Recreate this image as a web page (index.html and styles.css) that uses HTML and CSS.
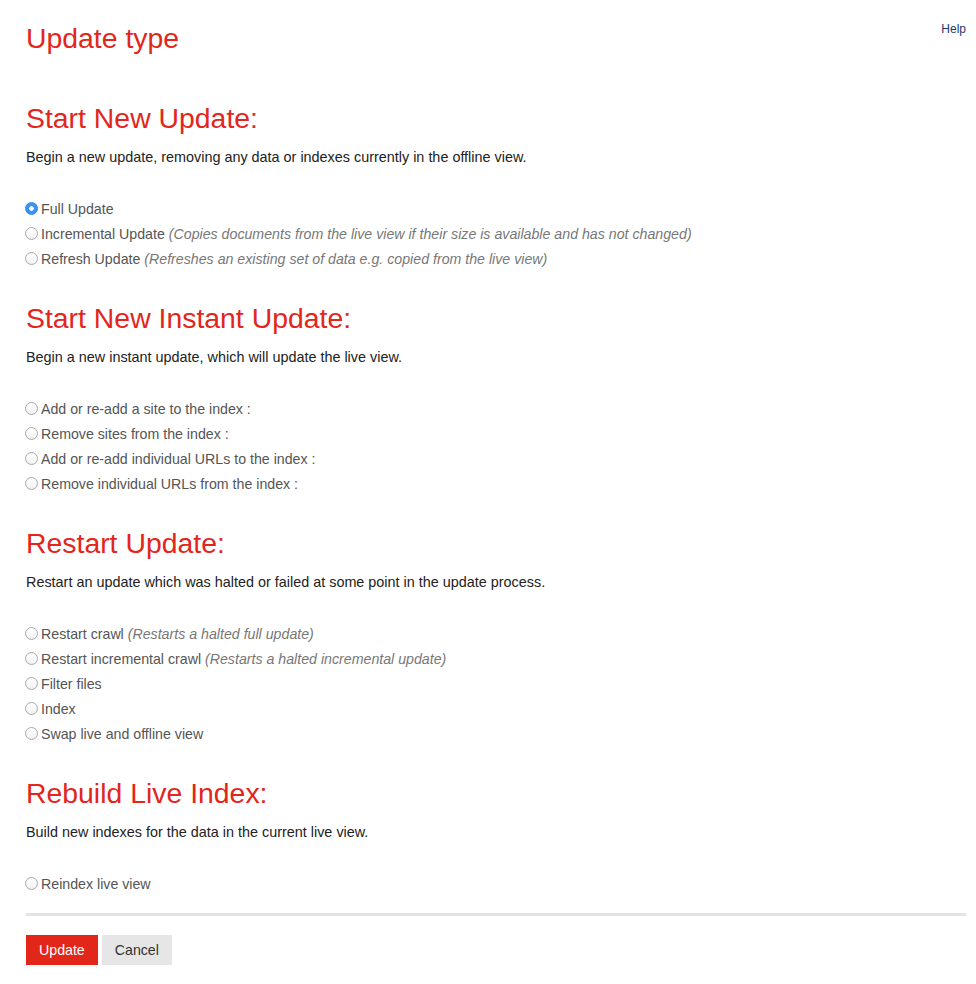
FILE: index.html
```html
<!DOCTYPE html>
<html lang="en">
<head>
<meta charset="utf-8">
<title>Update type</title>
<link rel="stylesheet" href="styles.css">
</head>
<body>
<div class="page">
  <header class="header">
    <h1 class="title">Update type</h1>
    <a class="help" href="#">Help</a>
  </header>

  <form class="form">
    <section class="section first">
      <h2 class="heading">Start New Update:</h2>
      <p class="desc">Begin a new update, removing any data or indexes currently in the offline view.</p>
      <div class="options">
        <label class="option"><input type="radio" name="t" checked><span>Full Update</span></label>
        <label class="option"><input type="radio" name="t"><span>Incremental Update <em>(Copies documents from the live view if their size is available and has not changed)</em></span></label>
        <label class="option"><input type="radio" name="t"><span>Refresh Update <em>(Refreshes an existing set of data e.g. copied from the live view)</em></span></label>
      </div>
    </section>

    <section class="section">
      <h2 class="heading">Start New Instant Update:</h2>
      <p class="desc">Begin a new instant update, which will update the live view.</p>
      <div class="options">
        <label class="option"><input type="radio" name="t"><span>Add or re-add a site to the index :</span></label>
        <label class="option"><input type="radio" name="t"><span>Remove sites from the index :</span></label>
        <label class="option"><input type="radio" name="t"><span>Add or re-add individual URLs to the index :</span></label>
        <label class="option"><input type="radio" name="t"><span>Remove individual URLs from the index :</span></label>
      </div>
    </section>

    <section class="section">
      <h2 class="heading">Restart Update:</h2>
      <p class="desc">Restart an update which was halted or failed at some point in the update process.</p>
      <div class="options">
        <label class="option"><input type="radio" name="t"><span>Restart crawl <em>(Restarts a halted full update)</em></span></label>
        <label class="option"><input type="radio" name="t"><span>Restart incremental crawl <em>(Restarts a halted incremental update)</em></span></label>
        <label class="option"><input type="radio" name="t"><span>Filter files</span></label>
        <label class="option"><input type="radio" name="t"><span>Index</span></label>
        <label class="option"><input type="radio" name="t"><span>Swap live and offline view</span></label>
      </div>
    </section>

    <section class="section">
      <h2 class="heading">Rebuild Live Index:</h2>
      <p class="desc">Build new indexes for the data in the current live view.</p>
      <div class="options">
        <label class="option"><input type="radio" name="t"><span>Reindex live view</span></label>
      </div>
    </section>

    <hr class="divider">

    <div class="actions">
      <button type="button" class="btn btn-primary">Update</button>
      <button type="button" class="btn btn-default">Cancel</button>
    </div>
  </form>
</div>
</body>
</html>
```

FILE: styles.css
```css
html, body {
  margin: 0;
  padding: 0;
  background: #ffffff;
}

body {
  font-family: "Liberation Sans", Arial, Helvetica, sans-serif;
  color: #222222;
}

.page {
  padding: 21px 10px 20px 26px;
}

.header {
  display: flex;
  justify-content: space-between;
  align-items: flex-start;
}

.title {
  margin: 0;
  font-size: 28.4px;
  line-height: 34px;
  font-weight: normal;
  color: #e2261c;
}

.help {
  font-size: 12px;
  line-height: 16px;
  color: #1d3a6b;
  text-decoration: none;
}

.form {
  margin: 0;
}

.section {
  margin-top: 30px;
}

.section.first {
  margin-top: 46px;
}

.heading {
  margin: 0;
  font-size: 28.4px;
  line-height: 34px;
  font-weight: normal;
  color: #e2261c;
}

.desc {
  margin: 13px 0 0;
  font-size: 14.4px;
  line-height: 19px;
  color: #222222;
}

.options {
  margin-top: 29px;
  display: flex;
  flex-direction: column;
}

.option {
  display: flex;
  align-items: center;
  height: 25px;
  font-size: 14.2px;
  line-height: 24px;
  color: #555555;
  margin-left: -1px;
}

.option em {
  color: #777777;
}

.option input {
  appearance: none;
  -webkit-appearance: none;
  width: 13px;
  height: 13px;
  margin: 0 3px 0 0;
  border: 1px solid #a9a9a9;
  border-radius: 50%;
  background: linear-gradient(#ffffff, #f1f1f1);
  box-sizing: border-box;
  flex: none;
}

.option input:checked {
  border-color: #2f86ec;
  background: radial-gradient(circle, #ffffff 0 2px, #3b94f5 2.5px);
}

.divider {
  margin: 17px 0 0;
  border: none;
  height: 3px;
  background: #e3e3e3;
}

.actions {
  display: flex;
  gap: 4px;
  margin-top: 19px;
}

.btn {
  height: 30px;
  padding: 0 13px;
  border: none;
  border-radius: 0;
  font-family: "Liberation Sans", Arial, Helvetica, sans-serif;
  font-size: 14.2px;
  cursor: pointer;
}

.btn-primary {
  background: #e3261a;
  color: #ffffff;
}

.btn-default {
  background: #e6e6e6;
  color: #333333;
}
```
